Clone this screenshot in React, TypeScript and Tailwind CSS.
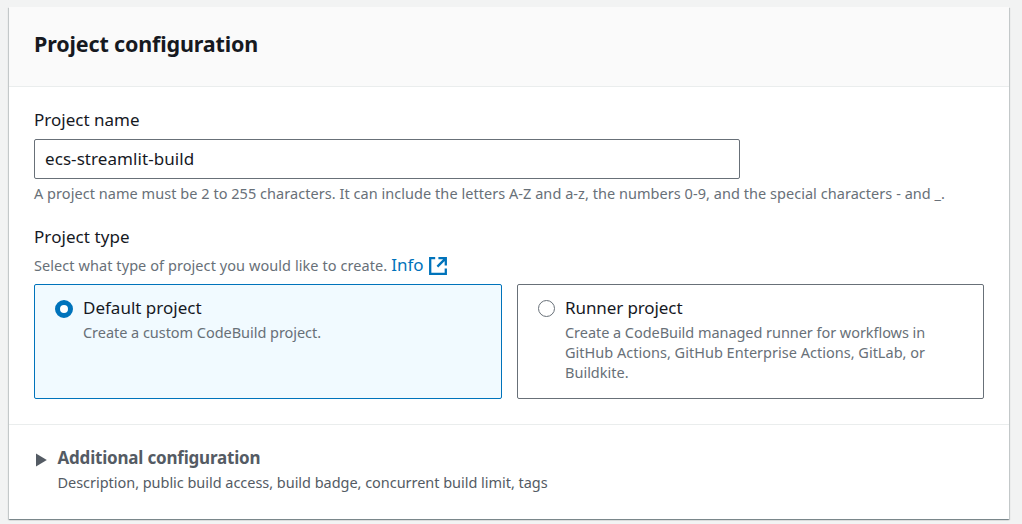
type ProjectOption = {
  title: string;
  titleTracking: string;
  lines: { text: string; tracking: string }[];
};

const options: ProjectOption[] = [
  {
    title: "Default project",
    titleTracking: "tracking-normal",
    lines: [{ text: "Create a custom CodeBuild project.", tracking: "tracking-[-0.04px]" }],
  },
  {
    title: "Runner project",
    titleTracking: "tracking-[-0.1px]",
    lines: [
      { text: "Create a CodeBuild managed runner for workflows in", tracking: "tracking-[-0.05px]" },
      { text: "GitHub Actions, GitHub Enterprise Actions, GitLab, or", tracking: "tracking-[0.01px]" },
      { text: "Buildkite.", tracking: "tracking-normal" },
    ],
  },
];

function ExternalIcon() {
  return (
    <svg className="mt-[4px] ml-[5px] h-[18px] w-[18px]" viewBox="0 0 18 18" fill="none" stroke="#0073bb" strokeWidth="2.3">
      <path d="M6.2 1.2H1.2V16.8H16.8V11.6M9.4 1.2H16.8V8.6M16.4 1.6L8.4 9.6" />
    </svg>
  );
}

function Radio({ checked }: { checked: boolean }) {
  return checked ? (
    <span className="mt-[4px] mr-px h-[18px] w-[18px] shrink-0 rounded-full border-[5.5px] border-[#0073bb] bg-white" />
  ) : (
    <span className="mt-[4px] mr-px h-[17px] w-[17px] shrink-0 rounded-full border border-[#687078] bg-white" />
  );
}

function OptionTile({ option, checked }: { option: ProjectOption; checked: boolean }) {
  return (
    <div
      className={
        checked
          ? "flex h-[115px] w-[468px] rounded-[2px] border border-[#0073bb] bg-[#f1faff] pt-[11px] pl-[20px]"
          : "flex h-[115px] w-[467px] rounded-[2px] border border-[#687078] bg-white pt-[11px] pl-[20px]"
      }
    >
      <Radio checked={checked} />
      <div className="ml-[9px]">
        <p className={`h-[26px] text-[17px] leading-[23px] whitespace-nowrap ${option.titleTracking}`}>{option.title}</p>
        <div className="text-[14.5px] leading-[20px] text-[#687078]">
          {option.lines.map((line) => (
            <p key={line.text} className={`whitespace-nowrap ${line.tracking}`}>
              {line.text}
            </p>
          ))}
        </div>
      </div>
    </div>
  );
}

export default function App() {
  return (
    <div className="h-[524px] overflow-hidden bg-[#f2f3f3] pt-[7px] pl-[9px] font-['Noto_Sans',sans-serif] text-[#16191f]">
      <section className="flex h-[512px] w-[1000px] flex-col bg-white shadow-[0_1px_1px_0_rgba(0,28,36,0.3),1px_1px_1px_0_rgba(0,28,36,0.15),-1px_1px_1px_0_rgba(0,28,36,0.15)]">
        <header className="h-[80px] border-b border-[#eaeded] bg-[#fafafa] pt-[22px] pl-[25px]">
          <h2 className="text-[21.5px] leading-[30px] font-bold tracking-[-0.15px]">Project configuration</h2>
        </header>

        <div className="h-[338px] border-b border-[#eaeded] pt-[20px] pl-[25px]">
          <label className="block h-[32px] text-[17px] leading-[26px]" htmlFor="project-name">
            Project name
          </label>
          <input
            id="project-name"
            className="block h-[40px] w-[706px] rounded-[2px] border border-[#687078] bg-white px-[10px] pb-[2px] text-[17px] tracking-[0.07px] outline-none"
            defaultValue="ecs-streamlit-build"
          />
          <p className="mt-[4px] text-[14.5px] leading-[20px] tracking-[0.043px] whitespace-nowrap text-[#687078]">
            A project name must be 2 to 255 characters. It can include the letters A-Z and a-z, the numbers 0-9, and the
            special characters - and _.
          </p>

          <p className="mt-[21px] text-[17px] leading-[26px] tracking-[0.08px]">Project type</p>
          <div className="mt-[3px] flex h-[31px] items-start">
            <span className="mt-[2px] text-[14.5px] leading-[20px] tracking-[0.07px] text-[#687078]">
              Select what type of project you would like to create.
            </span>
            <a className="ml-[4px] flex text-[17px] leading-[23px] text-[#0073bb]">
              Info
              <ExternalIcon />
            </a>
          </div>
          <div className="flex gap-[15px]">
            <OptionTile option={options[0]} checked />
            <OptionTile option={options[1]} checked={false} />
          </div>
        </div>

        <div className="flex pt-[20px] pl-[27px] text-[#545b64]">
          <svg className="mt-[8px] h-[14px] w-[11px]" viewBox="0 0 11 14" fill="#545b64">
            <path d="M0 0.6L10.8 7L0 13.4Z" />
          </svg>
          <div className="ml-[10.5px]">
            <h3 className="text-[17px] leading-[26px] font-bold tracking-[-0.2px]">Additional configuration</h3>
            <p className="mt-px text-[14.5px] leading-[20px] tracking-[-0.035px]">
              Description, public build access, build badge, concurrent build limit, tags
            </p>
          </div>
        </div>
      </section>
    </div>
  );
}
